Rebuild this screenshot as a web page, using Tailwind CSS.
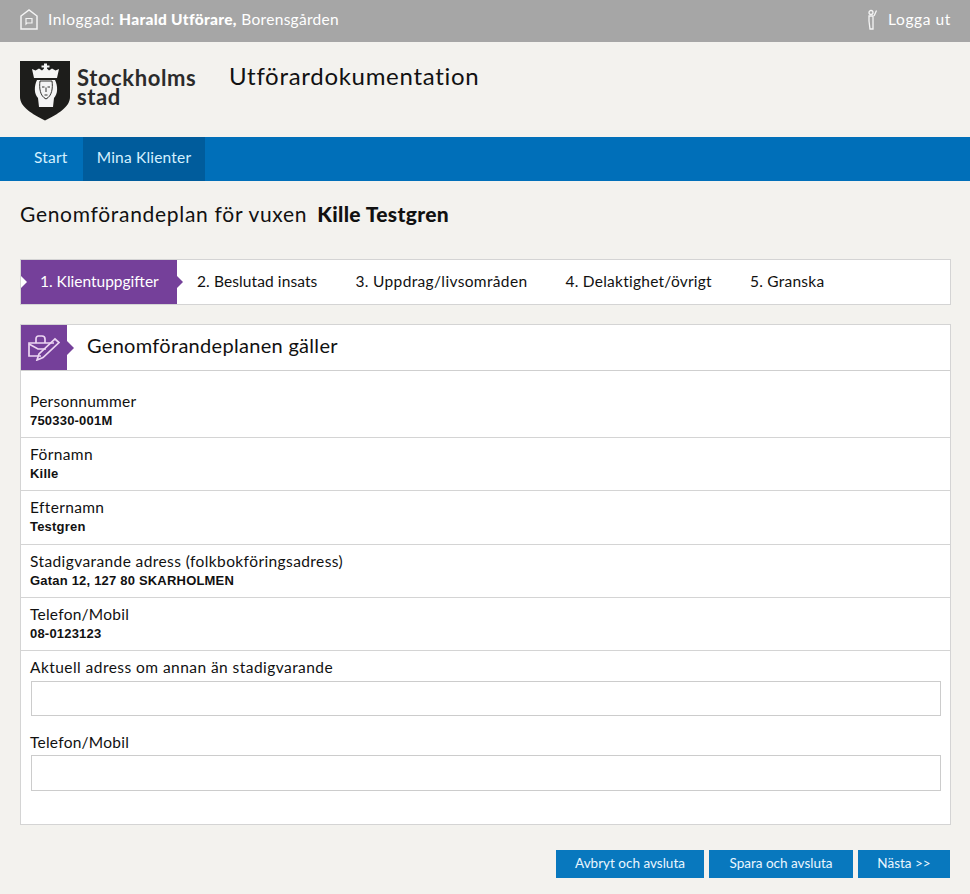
<!DOCTYPE html>
<html lang="sv">
<head>
    <meta charset="UTF-8">
    <meta name="viewport" content="width=device-width, initial-scale=1.0">
    <title>Utförardokumentation</title>
    <script src="https://cdn.jsdelivr.net/npm/@tailwindcss/browser@4"></script>
</head>
<body class="bg-[#f3f2ee] font-['Lato',sans-serif] text-[#111] h-[894px] overflow-hidden">
    <!-- Top bar -->
    <div class="h-[42px] bg-[#a6a6a6] text-white flex items-center justify-between pl-[20px] pr-[19px] text-[15.5px] tracking-[0.35px] pb-[3px]">
        <div class="flex items-center">
            <svg class="w-[18px] h-[21px] mr-[10px]" viewBox="0 0 18 21" fill="none" stroke="#f4f4f4" stroke-width="1.5">
                <path d="M1 7 L9 1 L17 7 V20 H1 Z"/>
                <path d="M6 9.500 H12 V14 H7 L6 15 Z" stroke-width="1.2"/>
            </svg>
            <span class="tracking-[0.55px]">Inloggad: <b class="font-black tracking-[0.3px]">Harald Utförare,</b> <span class="tracking-[0.3px]">Borensgården</span></span>
        </div>
        <div class="flex items-center">
            <svg class="w-[12px] h-[22px] mr-[10px]" viewBox="0 0 12 22" fill="none" stroke="#f4f4f4" stroke-width="1.3">
                <circle cx="5" cy="3.5" r="2"/>
                <path d="M3 7 H7 V20 H4 L3 12 Z"/>
                <path d="M8 7 L10.5 1.5"/>
            </svg>
            <span class="tracking-[0.6px]">Logga ut</span>
        </div>
    </div>

    <!-- Logo and title -->
    <div class="h-[95px] flex items-start pl-[20px]">
        <div class="flex items-start mt-[19px] w-[209px]">
            <svg class="w-[50px] h-[60px] shrink-0" viewBox="0 0 50 60">
                <path d="M0 0 H50 V36 C50 46 38 53 25 59.5 C12 53 0 46 0 36 Z" fill="#1d1d1b"/>
                <!-- crown -->
                <path d="M12 8 L15.500 9.500 L19 7.500 L22 9.500 L24 7.500 V6.500 H21.500 V4.500 H24 V2.500 H27 V4.500 H29.500 V6.500 H27 V7.500 L29 9.500 L32 7.500 L35.500 9.500 L39 8 L37 17 H14 Z" fill="#f4f4f4"/>
                <!-- hair and neck -->
                <path d="M17 19 H35 C38 25 38 33 34 37 L33 46 H19 L18 37 C14 33 14 25 17 19 Z" fill="#f4f4f4"/>
                <!-- face -->
                <path d="M20 20 H32 C33 27 32 35 26 38 C20 35 19 27 20 20 Z" fill="#f4f4f4" stroke="#1d1d1b" stroke-width="0.9"/>
                <path d="M22 26 H24.500 M27.500 26 H30 M26 26.500 V31 M24.500 34 H27.500" stroke="#1d1d1b" stroke-width="0.9" fill="none"/>
            </svg>
            <div class="ml-[7px] mt-[7px] text-[22px] font-bold text-[#2b2b2b] tracking-[0.6px]">
                <div class="h-[19px] leading-[19px]">Stockholms</div>
                <div class="h-[19px] leading-[19px]">stad</div>
            </div>
        </div>
        <div class="mt-[19px] text-[24px] leading-[30px] tracking-[0.7px] text-[#111]">Utförardokumentation</div>
    </div>

    <!-- Nav -->
    <nav class="h-[44px] bg-[#006fb9] flex pl-[20px] text-[15.5px] text-[#d4f0ff] tracking-[0.2px]">
        <a class="w-[63px] pl-[14px] flex items-center pb-[2px]">Start</a>
        <a class="w-[122px] bg-[#005c9c] flex items-center justify-center pb-[2px]">Mina Klienter</a>
    </nav>

    <main class="pl-[20px] pr-[19px]">
        <h1 class="mt-[19px] h-[28px] flex items-center text-[21px] tracking-[0.7px]">
            Genomförandeplan för vuxen <b class="ml-[10px] font-black tracking-[0.35px]">Kille Testgren</b>
        </h1>

        <!-- Steps -->
        <div class="mt-[31px] h-[46px] bg-white border border-[#d4d4d4] flex items-stretch text-[15.5px] tracking-[0.35px]">
            <div class="relative w-[156px] bg-[#75409a] text-white flex items-center pl-[19px] tracking-[0px]">
                1. Klientuppgifter
                <span class="absolute left-0 top-[16px] border-y-[6px] border-y-transparent border-l-[6px] border-l-white"></span>
                <span class="absolute -right-[6px] top-[16px] border-y-[6px] border-y-transparent border-l-[6px] border-l-[#75409a]"></span>
            </div>
            <div class="flex items-center pl-[20px] gap-[38px]">
                <span class="tracking-[0.1px]">2. Beslutad insats</span>
                <span>3. Uppdrag/livsområden</span>
                <span class="tracking-[0.25px]">4. Delaktighet/övrigt</span>
                <span class="tracking-[0.25px]">5. Granska</span>
            </div>
        </div>

        <!-- Card -->
        <section class="mt-[19px] h-[501px] bg-white border border-[#d4d4d4]">
            <div class="h-[46px] border-b border-[#cfcfcf] flex items-stretch">
                <div class="relative w-[46px] h-[45px] bg-[#75409a] flex items-center justify-center">
                    <svg class="w-[32px] h-[26px]" viewBox="0 0 32 26" fill="none" stroke="#ecd5f2" stroke-width="1.7">
                        <path d="M26 8 H1 V21 H13"/>
                        <path d="M1 9 L10 14 H18"/>
                        <path d="M8 8 V4 C8 2 9 1 10.500 1 H14 C16 1 17 2 17 4 V8"/>
                        <path d="M9 25 L11 19 L27 4 L31 7.500 L15 22.500 Z"/>
                    </svg>
                    <span class="absolute -right-[7px] top-[16px] border-y-[7px] border-y-transparent border-l-[7px] border-l-[#75409a]"></span>
                </div>
                <h2 class="ml-[20px] flex items-center pb-[6px] text-[20px] tracking-[0.3px]">Genomförandeplanen gäller</h2>
            </div>

            <div class="h-[67px] border-b border-[#d4d4d4] pl-[9px] pt-[20px]">
                <div class="text-[15.5px] leading-[20px] tracking-[0.25px]">Personnummer</div>
                <div class="font-['Liberation_Sans',sans-serif] font-bold text-[13px] leading-[20px] tracking-[0.2px]">750330-001M</div>
            </div>
            <div class="h-[53px] border-b border-[#d4d4d4] pl-[9px] pt-[6px]">
                <div class="text-[15.5px] leading-[20px] tracking-[0.4px]">Förnamn</div>
                <div class="font-['Liberation_Sans',sans-serif] font-bold text-[13px] leading-[20px] tracking-[0.2px]">Kille</div>
            </div>
            <div class="h-[54px] border-b border-[#d4d4d4] pl-[9px] pt-[6px]">
                <div class="text-[15.5px] leading-[20px] tracking-[0.35px]">Efternamn</div>
                <div class="font-['Liberation_Sans',sans-serif] font-bold text-[13px] leading-[20px] tracking-[0.2px]">Testgren</div>
            </div>
            <div class="h-[53px] border-b border-[#d4d4d4] pl-[9px] pt-[6px]">
                <div class="text-[15.5px] leading-[20px] tracking-[0.4px]">Stadigvarande adress (folkbokföringsadress)</div>
                <div class="font-['Liberation_Sans',sans-serif] font-bold text-[13px] leading-[20px] tracking-[0.2px]">Gatan 12, 127 80 SKARHOLMEN</div>
            </div>
            <div class="h-[53px] border-b border-[#d4d4d4] pl-[9px] pt-[6px]">
                <div class="text-[15.5px] leading-[20px] tracking-[0.25px]">Telefon/Mobil</div>
                <div class="font-['Liberation_Sans',sans-serif] font-bold text-[13px] leading-[20px] tracking-[0.2px]">08-0123123</div>
            </div>

            <div class="pl-[10px] pr-[9px] pt-[6px]">
                <label class="block -ml-[1px] text-[15.5px] leading-[20px] tracking-[0.45px]">Aktuell adress om annan än stadigvarande</label>
                <input class="block mt-[4px] w-full h-[35px] bg-white border border-[#cccccc]" type="text">
                <label class="block -ml-[1px] mt-[16px] text-[15.5px] leading-[20px] tracking-[0.25px]">Telefon/Mobil</label>
                <input class="block mt-[3px] w-full h-[36px] bg-white border border-[#cccccc]" type="text">
            </div>
        </section>

        <!-- Buttons -->
        <div class="mt-[25px] flex justify-end gap-[5px] pr-[1px] text-[13.5px] text-[#eaf6ff]">
            <button class="w-[148px] h-[28px] bg-[#0878be] pb-[2px]">Avbryt och avsluta</button>
            <button class="w-[144px] h-[28px] bg-[#0878be] pb-[2px]">Spara och avsluta</button>
            <button class="w-[92px] h-[28px] bg-[#0878be] pb-[2px]">Nästa &gt;&gt;</button>
        </div>
    </main>
</body>
</html>
